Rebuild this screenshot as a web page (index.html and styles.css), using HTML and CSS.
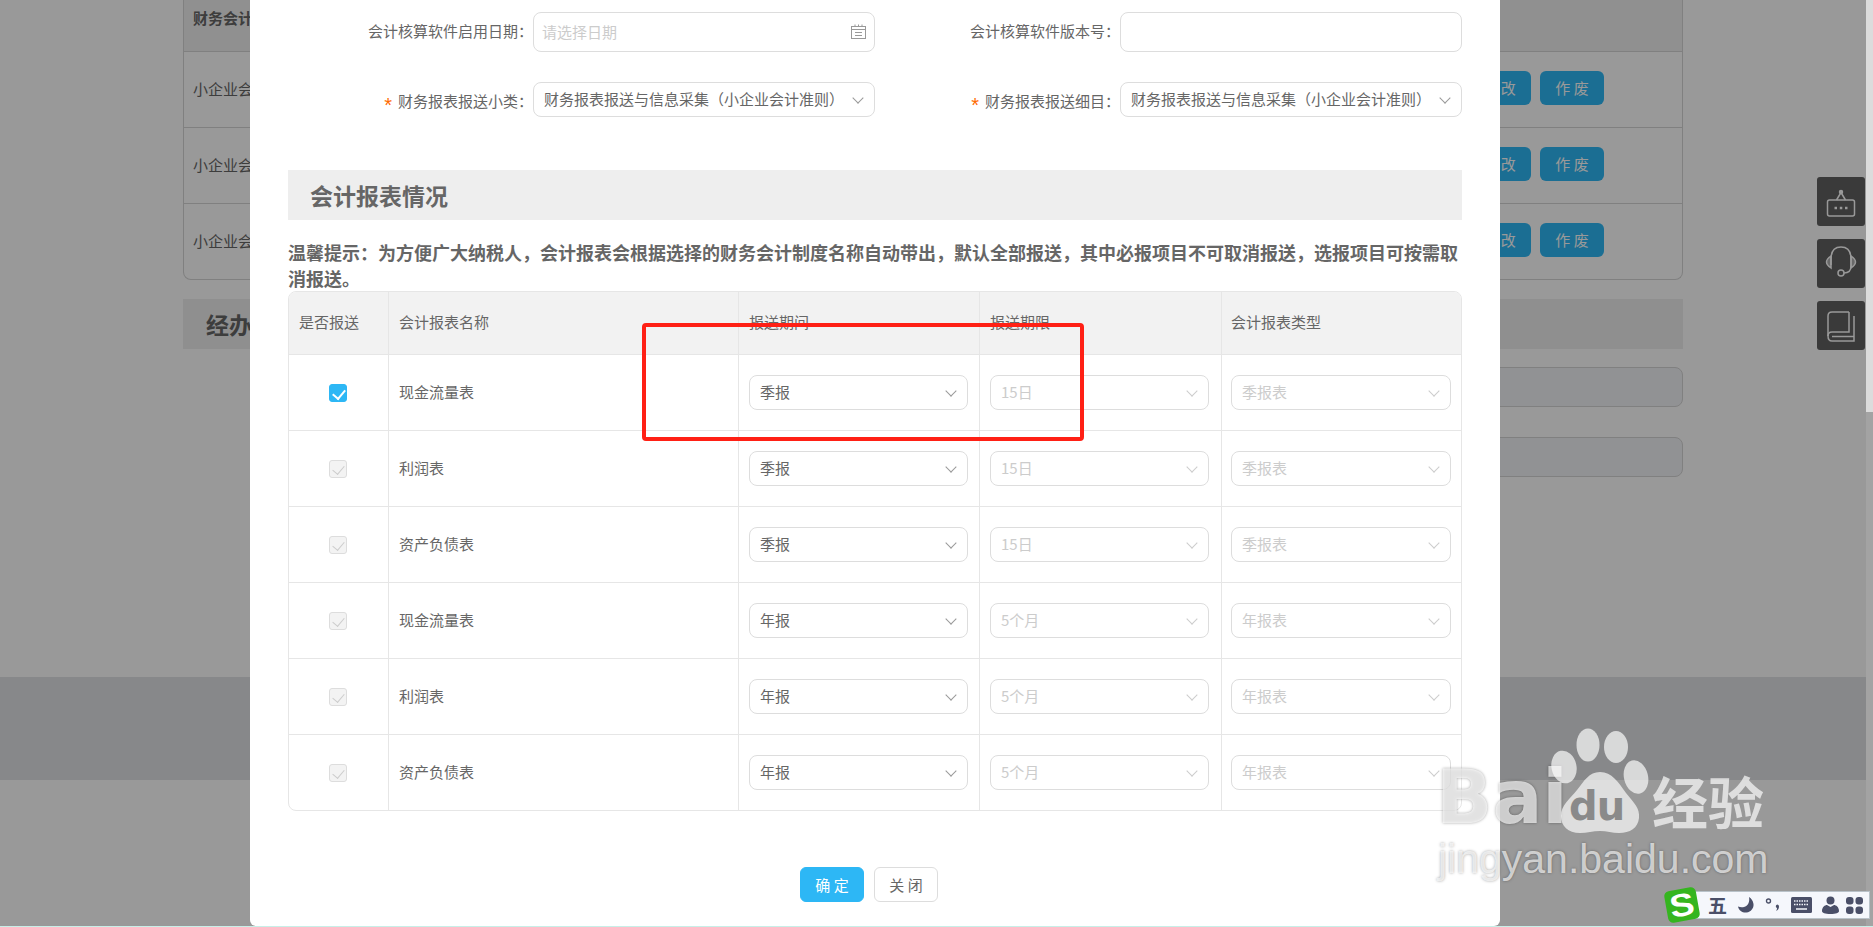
FILE: index.html
```html
<!DOCTYPE html>
<html lang="zh-CN">
<head>
    <meta charset="UTF-8">
    <title>会计报表情况</title>
    <link rel="stylesheet" href="styles.css">
</head>
<body>

<!-- page behind the dialog -->
<div class="page">
    <div class="bg-table">
        <div class="bg-head">财务会计制度</div>
        <div class="bg-row"><span>小企业会计准则</span><div class="bg-ops"><a>修 改</a><a>作 废</a></div></div>
        <div class="bg-row"><span>小企业会计准则</span><div class="bg-ops"><a>修 改</a><a>作 废</a></div></div>
        <div class="bg-row"><span>小企业会计准则</span><div class="bg-ops"><a>修 改</a><a>作 废</a></div></div>
    </div>
    <div class="bg-section">经办</div>
    <div class="bg-input"></div>
    <div class="bg-input"></div>
    <div class="bg-footer"></div>
</div>

<div class="side-tools">
    <div class="side-btn">
        <svg width="30" height="30" viewBox="0 0 30 30" fill="none" stroke="#fff" stroke-width="1.500"><rect x="1.500" y="13" width="27" height="16" rx="2"/><path d="M10.500 13L15 5.500 19.500 13"/><circle cx="15" cy="5" r="1.500" fill="#fff"/><path d="M8.500 21h2.500M13.800 21h2.500M19 21h2.500" stroke-width="2.400"/></svg>
    </div>
    <div class="side-btn">
        <svg width="34" height="38" viewBox="0 0 34 38" fill="none" stroke="#fff" stroke-width="1.500"><path d="M7 20v-6C7 6 11 2 17 2s10 4 10 12v7c0 5-3 7-7 7"/><path d="M7 11c-3 2-4.500 4-4.500 6s1.500 4 4.500 6z" fill="#fff" fill-opacity=".5"/><path d="M27 11c3 2 4.500 4 4.500 6s-1.500 4-4.500 6z" fill="#fff" fill-opacity=".5"/><circle cx="17" cy="28" r="3"/></svg>
    </div>
    <div class="side-btn">
        <svg width="30" height="34" viewBox="0 0 30 34" fill="none" stroke="#fff" stroke-width="1.500"><path d="M23 3H6C3.500 3 2 4.500 2 7v20c0 3 1.500 5 4 5h22V7"/><path d="M23 3v20H6c-2.500 0-4 1.500-4 4"/><path d="M6 27.500h22"/></svg>
    </div>
</div>

<div class="mask"></div>

<div class="scrollbar"><div class="scroll-thumb"></div></div>

<!-- dialog -->
<div class="modal">
    <div class="form-row first">
        <div class="field">
            <label>会计核算软件启用日期：</label>
            <div class="input tall placeholder">
                <span>请选择日期</span>
                <svg width="15" height="15" viewBox="0 0 15 15" fill="none" stroke="#999"><rect x=".5" y="2.500" width="14" height="12"/><path d="M.5 5.500h14M4 .5v2M7.500 .5v2M11 .5v2M4 8.500h7M4 11.500h7"/></svg>
            </div>
        </div>
        <div class="field">
            <label>会计核算软件版本号：</label>
            <div class="input tall"></div>
        </div>
    </div>
    <div class="form-row">
        <div class="field">
            <label><i>*</i>财务报表报送小类：</label>
            <div class="input select"><span>财务报表报送与信息采集（小企业会计准则）</span><b class="arrow"></b></div>
        </div>
        <div class="field">
            <label><i>*</i>财务报表报送细目：</label>
            <div class="input select"><span>财务报表报送与信息采集（小企业会计准则）</span><b class="arrow"></b></div>
        </div>
    </div>

    <h2 class="section-title">会计报表情况</h2>
    <p class="tip">温馨提示：为方便广大纳税人，会计报表会根据选择的财务会计制度名称自动带出，默认全部报送，其中必报项目不可取消报送，选报项目可按需取消报送。</p>

    <div class="report-table">
        <div class="tr th">
            <div>是否报送</div><div>会计报表名称</div><div>报送期间</div><div>报送期限</div><div>会计报表类型</div>
        </div>
        <div class="tr">
            <div class="center"><span class="check on"></span></div><div>现金流量表</div>
            <div><div class="input select"><span>季报</span><b class="arrow"></b></div></div>
            <div><div class="input select off"><span>15日</span><b class="arrow"></b></div></div>
            <div><div class="input select off"><span>季报表</span><b class="arrow"></b></div></div>
        </div>
        <div class="tr">
            <div class="center"><span class="check"></span></div><div>利润表</div>
            <div><div class="input select"><span>季报</span><b class="arrow"></b></div></div>
            <div><div class="input select off"><span>15日</span><b class="arrow"></b></div></div>
            <div><div class="input select off"><span>季报表</span><b class="arrow"></b></div></div>
        </div>
        <div class="tr">
            <div class="center"><span class="check"></span></div><div>资产负债表</div>
            <div><div class="input select"><span>季报</span><b class="arrow"></b></div></div>
            <div><div class="input select off"><span>15日</span><b class="arrow"></b></div></div>
            <div><div class="input select off"><span>季报表</span><b class="arrow"></b></div></div>
        </div>
        <div class="tr">
            <div class="center"><span class="check"></span></div><div>现金流量表</div>
            <div><div class="input select"><span>年报</span><b class="arrow"></b></div></div>
            <div><div class="input select off"><span>5个月</span><b class="arrow"></b></div></div>
            <div><div class="input select off"><span>年报表</span><b class="arrow"></b></div></div>
        </div>
        <div class="tr">
            <div class="center"><span class="check"></span></div><div>利润表</div>
            <div><div class="input select"><span>年报</span><b class="arrow"></b></div></div>
            <div><div class="input select off"><span>5个月</span><b class="arrow"></b></div></div>
            <div><div class="input select off"><span>年报表</span><b class="arrow"></b></div></div>
        </div>
        <div class="tr">
            <div class="center"><span class="check"></span></div><div>资产负债表</div>
            <div><div class="input select"><span>年报</span><b class="arrow"></b></div></div>
            <div><div class="input select off"><span>5个月</span><b class="arrow"></b></div></div>
            <div><div class="input select off"><span>年报表</span><b class="arrow"></b></div></div>
        </div>
    </div>

    <div class="modal-btns">
        <button class="btn primary">确 定</button>
        <button class="btn">关 闭</button>
    </div>
</div>

<!-- annotation drawn on the screenshot -->
<div class="red-box"></div>

<!-- watermark -->
<div class="watermark">
    <div class="wm-top">
        <span class="wm-bai">Bai</span>
        <div class="wm-paw">
            <svg width="100" height="106" viewBox="0 0 100 106" fill="currentColor"><ellipse cx="38" cy="17" rx="11.500" ry="16.500"/><ellipse cx="66" cy="19" rx="12" ry="16"/><ellipse cx="14" cy="39" rx="12.500" ry="16.500" transform="rotate(-12 14 39)"/><ellipse cx="86" cy="49" rx="12" ry="17" transform="rotate(-14 86 49)"/><path d="M50 44c12 0 18 10 26 21 8 10 14 15 13 25-1 10-9 15-20 15-7 0-12-2-19-2s-13 2-20 2c-12 0-19-7-19-17 0-11 9-17 16-26 7-9 12-18 23-18z"/></svg>
            <span class="wm-du">du</span>
        </div>
        <span class="wm-jy">经验</span>
    </div>
    <div class="wm-url">jingyan.baidu.com</div>
</div>

<!-- input method bar -->
<div class="ime">
    <div class="ime-logo"><span>S</span></div>
    <div class="ime-bar">
        <span class="ime-wu">五</span>
        <svg width="18" height="18" viewBox="0 0 18 18" fill="#4a4f68"><path d="M12 1c1 5-1 9-5 10-2 .5-4 .3-6-.5C2 15 6 17 9.500 16.500 14 16 17 12 16.500 8 16 5 14.500 2.500 12 1z"/></svg>
        <svg width="16" height="18" viewBox="0 0 16 18" fill="none" stroke="#4a4f68"><circle cx="3.500" cy="5" r="2" stroke-width="1.400"/><path d="M12.500 8.500a2 2 0 0 1 1.500 2c0 2-1 3.500-3 4.500 .8-1.200 1-2 1-3a1.800 1.800 0 0 1 .5-3.500z" fill="#4a4f68" stroke="none"/></svg>
        <svg width="21" height="16" viewBox="0 0 21 16"><rect width="21" height="16" rx="1.500" fill="#4a4f68"/><path d="M3 4h15M3 7.500h15" stroke="#f4f6fb" stroke-width="1.500" stroke-dasharray="1.500 1"/><path d="M5 12h11" stroke="#f4f6fb" stroke-width="1.500"/></svg>
        <svg width="17" height="18" viewBox="0 0 17 18" fill="#4a4f68"><circle cx="8.500" cy="4.500" r="4"/><path d="M0 15c0-4 3-6 5-6l3.500 2L12 9c2 0 5 2 5 6 0 2-3 3-8.500 3S0 17 0 15z"/></svg>
        <svg class="ime-more" width="17" height="17" viewBox="0 0 17 17" fill="#4a4f68"><rect x="0" y="0" width="7.500" height="7.500" rx="3"/><rect x="9.500" y="0" width="7.500" height="7.500" rx="3"/><rect x="0" y="9.500" width="7.500" height="7.500" rx="3"/><rect x="9.500" y="9.500" width="7.500" height="7.500" rx="3"/></svg>
    </div>
</div>

<div class="bottom-line"></div>

</body>
</html>
```

FILE: styles.css
```css
* {
    box-sizing: border-box;
}

html, body {
    margin: 0;
    height: 927px;
    overflow: hidden;
}

body {
    position: relative;
    font-family: "Noto Sans CJK SC", "Noto Sans", sans-serif;
    font-size: 15px;
    color: #666;
    background-color: #fff;
}

/* page behind the dialog */
.page {
    padding-left: 183px;
    padding-right: 190px;
}

.bg-table {
    border: 1px solid #d5d5d5;
    border-top: 0;
    border-radius: 0 0 8px 8px;
    overflow: hidden;
}

.bg-head {
    height: 51px;
    padding: 0 9px;
    line-height: 36px;
    font-weight: bold;
    background-color: #f0f0f0;
}

.bg-row {
    display: flex;
    align-items: center;
    justify-content: space-between;
    height: 76px;
    padding: 0 0 3px 9px;
    border-top: 1px solid #d5d5d5;
}

.bg-ops {
    display: flex;
    gap: 9px;
    margin-right: 78px;
}

.bg-ops a {
    display: block;
    width: 64px;
    height: 34px;
    line-height: 34px;
    text-align: center;
    color: #fff;
    background-color: #2db7f5;
    border-radius: 6px;
}

.bg-section {
    height: 50px;
    margin-top: 19px;
    padding-left: 23px;
    line-height: 50px;
    font-size: 23px;
    font-weight: bold;
    background-color: #eee;
}

.bg-input {
    height: 40px;
    margin-top: 18px;
    margin-left: 400px;
    background-color: #f2f3f7;
    border: 1px solid #d5d5d5;
    border-radius: 8px;
}

.bg-input + .bg-input {
    margin-top: 30px;
}

.bg-footer {
    position: absolute;
    left: 0;
    right: 0;
    top: 677px;
    height: 103px;
    background-color: #e1e3e6;
}

/* side tool buttons */
.side-tools {
    position: absolute;
    top: 177px;
    left: 1817px;
    display: flex;
    flex-direction: column;
    gap: 13px;
}

.side-btn {
    display: flex;
    align-items: center;
    justify-content: center;
    width: 48px;
    height: 49px;
    background-color: #616161;
    border-radius: 3px;
}

.mask {
    position: absolute;
    top: 0;
    left: 0;
    right: 0;
    bottom: 0;
    background-color: rgba(0, 0, 0, .4);
}

.scrollbar {
    position: absolute;
    top: 0;
    right: 0;
    bottom: 0;
    width: 7px;
    background-color: #a3a3a3;
}

.scroll-thumb {
    height: 412px;
    background-color: #dcdcdc;
}

/* dialog */
.modal {
    position: absolute;
    top: 0;
    left: 250px;
    width: 1250px;
    height: 926px;
    padding: 12px 38px 0;
    background-color: #fff;
    border-radius: 0 0 6px 6px;
}

.form-row {
    display: flex;
    height: 35px;
    margin-bottom: 53px;
}

.form-row.first {
    height: 40px;
    margin-bottom: 30px;
}

.field {
    display: flex;
    align-items: center;
}

.field:first-child {
    width: 587px;
}

.field label {
    width: 245px;
    padding-top: 2px;
    text-align: right;
    white-space: nowrap;
}

.form-row.first label {
    padding-top: 0;
    padding-bottom: 3px;
}

.field label i {
    display: inline-block;
    margin-right: 6px;
    font-family: "Liberation Sans", sans-serif;
    font-size: 20px;
    line-height: 14px;
    font-style: normal;
    vertical-align: -5px;
    color: #ff6a00;
}

.field .input {
    width: 342px;
}

.input {
    display: flex;
    align-items: center;
    justify-content: space-between;
    height: 35px;
    padding: 0 10px 2px;
    background-color: #fff;
    border: 1px solid #ddd;
    border-radius: 8px;
}

.input.tall {
    height: 40px;
}

.input.placeholder {
    padding: 0 8px 2px;
    color: #ccc;
}

.input.off {
    color: #ccc;
}

.arrow {
    width: 8px;
    height: 8px;
    margin: -2px 2px 0 0;
    border-right: 1px solid #999;
    border-bottom: 1px solid #999;
    transform: rotate(45deg);
}

.input.off .arrow {
    border-color: #ccc;
}

.section-title {
    height: 50px;
    margin: 0;
    padding-left: 22px;
    line-height: 50px;
    font-size: 23px;
    font-weight: bold;
    background-color: #eee;
}

.tip {
    margin: 19px 0 0;
    line-height: 26px;
    font-size: 18px;
    font-weight: bold;
}

.report-table {
    border: 1px solid #e6e6e6;
    border-radius: 8px;
    overflow: hidden;
}

.tr {
    display: grid;
    grid-template-columns: 99px 350px 241px 242px 1fr;
    height: 76px;
    border-top: 1px solid #e6e6e6;
}

.tr > div {
    display: flex;
    align-items: center;
    padding: 0 11px 0 10px;
    border-left: 1px solid #e6e6e6;
}

.tr > div:first-child {
    border-left: 0;
}

.tr > div:nth-child(2) {
    padding-bottom: 2px;
}

.tr > div:nth-child(4) {
    padding-right: 12px;
}

.tr > div:last-child {
    padding: 0 10px 0 9px;
}

.tr > div > .input {
    width: 100%;
}

.tr.th {
    height: 62px;
    border-top: 0;
    background-color: #f2f2f2;
}

.tr.th > div {
    padding-bottom: 4px;
}

.tr .center {
    justify-content: center;
}

.check {
    position: relative;
    width: 18px;
    height: 18px;
    background-color: #f3f3f3;
    border: 1px solid #ddd;
    border-radius: 3px;
}

.check:after {
    content: "";
    position: absolute;
    left: 5px;
    top: 2px;
    width: 6px;
    height: 10px;
    border-right: 1.500px solid #ccc;
    border-bottom: 1.500px solid #ccc;
    transform: rotate(40deg);
}

.check.on {
    background-color: #2db7f5;
    border-color: #2db7f5;
}

.check.on:after {
    border-color: #fff;
    border-width: 2px;
}

.modal-btns {
    display: flex;
    justify-content: center;
    gap: 10px;
    margin-top: 56px;
    padding-right: 12px;
}

.btn {
    width: 64px;
    height: 35px;
    padding: 0;
    font-family: inherit;
    font-size: 15px;
    color: #666;
    background-color: #fff;
    border: 1px solid #ddd;
    border-radius: 6px;
}

.btn.primary {
    color: #fff;
    background-color: #2db7f5;
    border-color: #2db7f5;
}

.red-box {
    position: absolute;
    top: 323px;
    left: 642px;
    width: 442px;
    height: 118px;
    border: 4px solid #ff2015;
    border-radius: 4px;
}

/* watermark */
.watermark {
    position: absolute;
    top: 728px;
    left: 1436px;
    color: rgba(255, 255, 255, .68);
}

.wm-top {
    display: flex;
    align-items: flex-end;
    height: 106px;
}

.wm-bai {
    width: 114px;
    font-family: "DejaVu Sans", sans-serif;
    font-size: 74px;
    line-height: 74px;
    font-weight: bold;
    text-shadow: 0 0 3px rgba(0, 0, 0, .35);
}

.wm-paw {
    position: relative;
    width: 100px;
    height: 106px;
}

.wm-paw svg {
    display: block;
}

.wm-du {
    position: absolute;
    left: 19px;
    bottom: 4px;
    font-family: "DejaVu Sans", sans-serif;
    font-size: 40px;
    line-height: 48px;
    font-weight: bold;
    letter-spacing: -1px;
    color: #8a8a8a;
}

.wm-jy {
    margin-left: 2px;
    font-size: 56px;
    line-height: 68px;
    font-weight: bold;
}

.wm-url {
    margin-left: 2px;
    font-family: "Liberation Sans", sans-serif;
    font-size: 41px;
    line-height: 50px;
    text-shadow: 0 0 3px rgba(0, 0, 0, .35);
}

/* input method bar */
.ime {
    position: absolute;
    top: 889px;
    left: 1666px;
    display: flex;
    align-items: center;
}

.ime-logo {
    z-index: 1;
    width: 32px;
    height: 32px;
    text-align: center;
    background-color: #35b51f;
    border-radius: 5px;
    transform: rotate(-10deg);
}

.ime-logo span {
    display: block;
    font-family: "Liberation Sans", sans-serif;
    font-size: 32px;
    line-height: 32px;
    font-weight: bold;
    color: #fff;
    transform: scaleX(1.15);
}

.ime-bar {
    display: flex;
    align-items: center;
    gap: 10px;
    width: 175px;
    height: 28px;
    margin-left: -3px;
    padding-left: 12px;
    background-color: #f5f7fc;
    border: 1px solid #b9c2c9;
}

.ime-wu {
    font-size: 19px;
    line-height: 18px;
    font-weight: bold;
    color: #4a4f68;
}

.ime-more {
    margin-left: -3px;
}

.bottom-line {
    position: absolute;
    left: 0;
    right: 0;
    bottom: 0;
    height: 1px;
    background-color: #c8efe8;
}
```
